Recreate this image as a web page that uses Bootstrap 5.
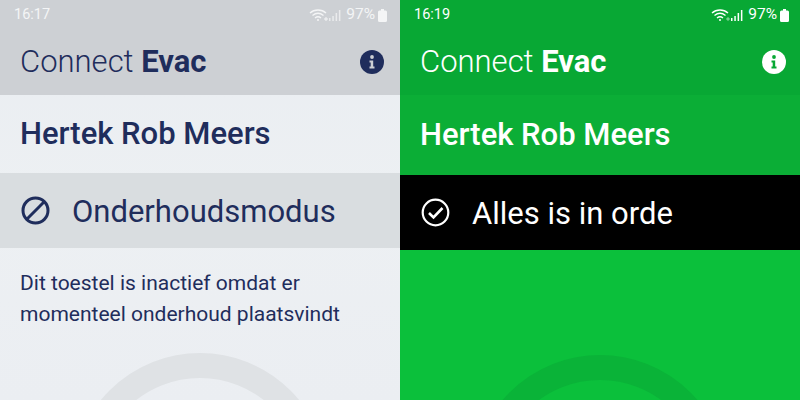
<!DOCTYPE html>
<html lang="en">
<head>
  <meta charset="UTF-8">
  <title>Connect Evac</title>
  <link href="https://cdn.jsdelivr.net/npm/bootstrap@5.3.3/dist/css/bootstrap.min.css" rel="stylesheet">
  <style>
    html, body { width: 800px; height: 400px; overflow: hidden; }
    body { font-family: Roboto, "Liberation Sans", sans-serif; }
    .phone { width: 400px; height: 400px; overflow: hidden; }
    .phone > * { flex-shrink: 0; }
    .phone-off { background: linear-gradient(#e9edf1, #edf0f3 50%, #ebeef2); color: #1f2d5c; --bar-bg: #cdd0d4; --state-bg: #d9dde0; --arc: #dfe2e5; --sb: #f4f5f6; }
    .phone-ok { background: #0bc03b; color: #fff; --bar-bg: #08a834; --state-bg: #000; --arc: #0ab338; --sb: #fff; }
    .top-bar { height: 95px; background: var(--bar-bg); }
    .status-line { height: 30px; padding: 0 13px 0 14px; font-size: 14.5px; color: var(--sb); }
    .phone-ok .status-line { padding-right: 11px; }
    .status-pct { font-size: 15.5px; margin-left: 5px; margin-right: 3px; }
    .app-line { height: 65px; padding: 0 16px 2px 20px; }
    .phone-ok .app-line { padding-right: 14px; }
    .app-title { font-size: 31px; font-weight: 300; line-height: 1; margin: 0; }
    .app-title b { font-weight: 700; }
    .device-name { height: 78px; padding-left: 20px; font-size: 31px; font-weight: 500; }
    .state-line { height: 75px; padding-left: 20px; gap: 21px; background: var(--state-bg); font-size: 31px; }
    .state-text { padding-top: 3px; }
    .phone-ok .device-name { height: 80px; background: #0bae36; }
    .note { margin: 20px 20px 0; font-size: 21px; line-height: 31px; height: 62px; }
    .ring { width: 256px; height: 256px; border: 25px solid var(--arc); border-radius: 50%; }
    .phone-off .ring { margin-top: 23px; }
    .phone-ok .ring { margin-top: 105px; }
  </style>
</head>
<body>
  <div class="d-flex">
    <div class="phone phone-off d-flex flex-column">
      <div class="top-bar">
        <div class="status-line d-flex align-items-center">
          <span>16:17</span>
          <span class="ms-auto d-flex align-items-center">
            <svg width="20" height="14" viewBox="0 0 20 14" fill="none" stroke="currentColor" stroke-width="1.4"><path d="M1 5C5.500 1 12.500 1 17 5M3.500 7.500C6.800 4.800 11.200 4.800 14.500 7.500M6 10C7.800 8.600 10.200 8.600 12 10"/><circle cx="9" cy="12" r="1" fill="currentColor" stroke="none"/><path d="M15 11h4M17 9v4" stroke-width="1"/></svg>
            <svg width="12" height="12" viewBox="0 0 12 12" fill="currentColor" opacity=".75"><rect x="0" y="9" width="1.500" height="3"/><rect x="3.300" y="7" width="1.500" height="5"/><rect x="6.600" y="4" width="1.500" height="8"/><rect x="9.900" y="1" width="1.500" height="11"/></svg>
            <span class="status-pct">97%</span>
            <svg width="9" height="13" viewBox="0 0 9 13" fill="currentColor"><path d="M3 0h3v1.500h1.500A1.500 1.500 0 0 1 9 3v8.500A1.500 1.500 0 0 1 7.500 13h-6A1.500 1.500 0 0 1 0 11.500V3a1.500 1.500 0 0 1 1.500-1.500H3z"/></svg>
          </span>
        </div>
        <div class="app-line d-flex align-items-center justify-content-between">
          <h1 class="app-title">Connect <b>Evac</b></h1>
          <svg width="24" height="24" viewBox="0 0 24 24"><circle cx="12" cy="12" r="12" fill="#1f2d5c"/><circle cx="12" cy="7" r="1.900" fill="#cdd0d4"/><path d="M9.500 10.500h3.700v6h1.300v2h-5v-2h1.200v-4h-1.200z" fill="#cdd0d4"/></svg>
        </div>
      </div>
      <div class="device-name d-flex align-items-center">Hertek Rob Meers</div>
      <div class="state-line d-flex align-items-center">
        <svg width="31" height="31" viewBox="0 0 31 31" fill="none" stroke="currentColor" stroke-width="3"><circle cx="15.500" cy="15.500" r="12.500"/><path d="M6.800 24.200L24.200 6.800"/></svg>
        <span class="state-text">Onderhoudsmodus</span>
      </div>
      <p class="note">Dit toestel is inactief omdat er momenteel onderhoud plaatsvindt</p>
      <div class="ring align-self-center"></div>
    </div>
    <div class="phone phone-ok d-flex flex-column">
      <div class="top-bar">
        <div class="status-line d-flex align-items-center">
          <span>16:19</span>
          <span class="ms-auto d-flex align-items-center">
            <svg width="20" height="14" viewBox="0 0 20 14" fill="none" stroke="currentColor" stroke-width="1.4"><path d="M1 5C5.500 1 12.500 1 17 5M3.500 7.500C6.800 4.800 11.200 4.800 14.500 7.500M6 10C7.800 8.600 10.200 8.600 12 10"/><circle cx="9" cy="12" r="1" fill="currentColor" stroke="none"/><path d="M15 11h4M17 9v4" stroke-width="1" opacity=".5"/></svg>
            <svg width="12" height="12" viewBox="0 0 12 12" fill="currentColor"><rect x="0" y="9" width="1.500" height="3"/><rect x="3.300" y="7" width="1.500" height="5"/><rect x="6.600" y="4" width="1.500" height="8"/><rect x="9.900" y="1" width="1.500" height="11"/></svg>
            <span class="status-pct">97%</span>
            <svg width="9" height="13" viewBox="0 0 9 13" fill="currentColor"><path d="M3 0h3v1.500h1.500A1.500 1.500 0 0 1 9 3v8.500A1.500 1.500 0 0 1 7.500 13h-6A1.500 1.500 0 0 1 0 11.500V3a1.500 1.500 0 0 1 1.500-1.500H3z"/></svg>
          </span>
        </div>
        <div class="app-line d-flex align-items-center justify-content-between">
          <h1 class="app-title">Connect <b>Evac</b></h1>
          <svg width="24" height="24" viewBox="0 0 24 24"><circle cx="12" cy="12" r="12" fill="#fff"/><circle cx="12" cy="7" r="1.900" fill="#08a834"/><path d="M9.500 10.500h3.700v6h1.300v2h-5v-2h1.200v-4h-1.200z" fill="#08a834"/></svg>
        </div>
      </div>
      <div class="device-name d-flex align-items-center">Hertek Rob Meers</div>
      <div class="state-line d-flex align-items-center">
        <svg width="31" height="31" viewBox="0 0 31 31" fill="none" stroke="currentColor" stroke-width="2.200"><circle cx="15.500" cy="15.500" r="12.800"/><path d="M9 16l4.500 4.500L22.500 11" stroke-width="2.600"/></svg>
        <span class="state-text">Alles is in orde</span>
      </div>
      <div class="ring align-self-center"></div>
    </div>
  </div>
</body>
</html>
